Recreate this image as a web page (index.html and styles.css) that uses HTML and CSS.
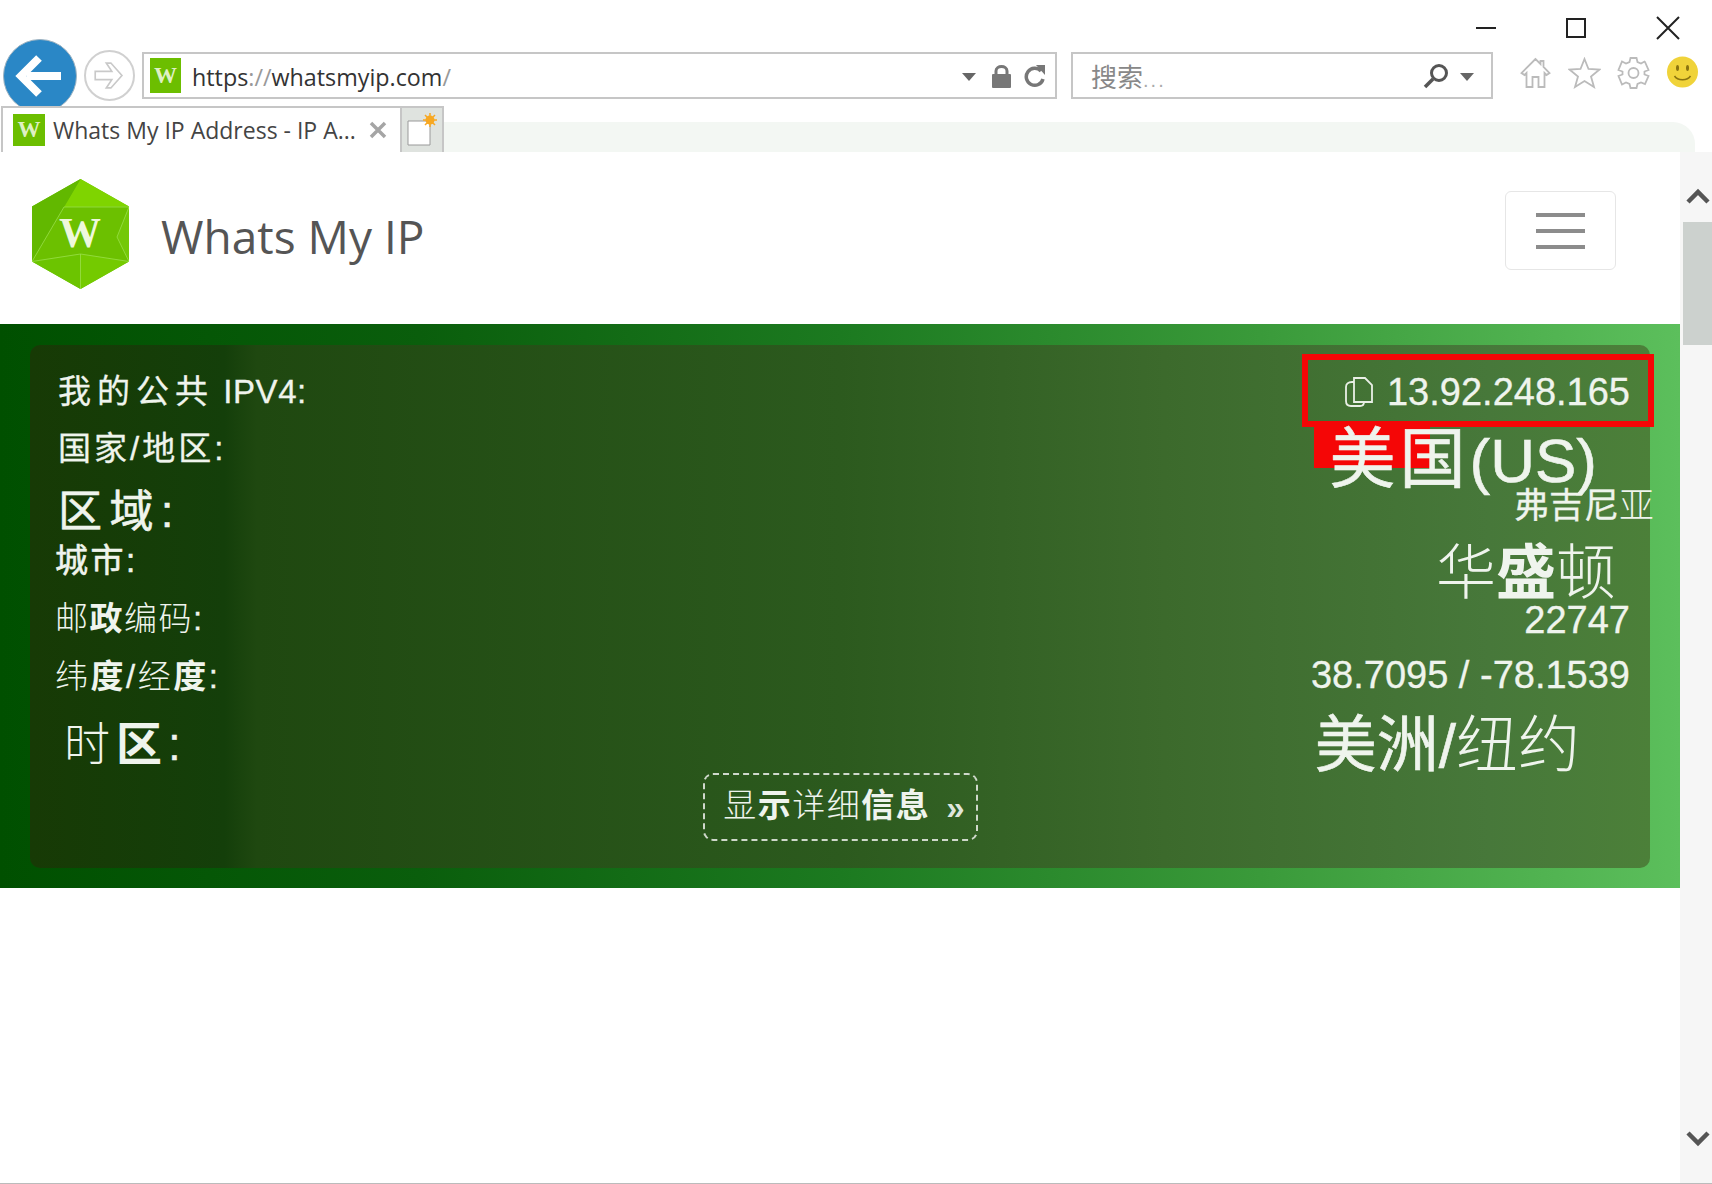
FILE: index.html
```html
<!DOCTYPE html>
<html lang="zh-CN">
<head>
    <meta charset="UTF-8">
    <title>Whats My IP</title>
    <link rel="stylesheet" href="styles.css">
</head>
<body>

    <div class="browser">
        <!-- window buttons -->
        <div class="titlebar">
            <svg class="win-btn win-min" viewBox="0 0 20 20"><path d="M0 10H20" stroke="#222" stroke-width="2"/></svg>
            <svg class="win-btn win-max" viewBox="0 0 20 20"><rect x="1" y="1" width="18" height="18" fill="none" stroke="#222" stroke-width="2"/></svg>
            <svg class="win-btn win-close" viewBox="0 0 24 24"><path d="M1 1L23 23M23 1L1 23" stroke="#222" stroke-width="2"/></svg>
        </div>

        <!-- back, forward, address and search -->
        <div class="navbar">
            <div class="back-btn">
                <svg viewBox="0 0 74 74" width="74" height="74"><path d="M58 37H24M36 19L18 37L36 55" fill="none" stroke="#fff" stroke-width="8"/></svg>
            </div>
            <div class="forward-btn">
                <svg viewBox="0 0 51 51" width="47" height="47"><path d="M10 21H28L22 12H27L39 25.500L27 39H22L28 30H10Z" fill="none" stroke="#c9c9c9" stroke-width="1.800"/></svg>
            </div>
            <div class="address-bar">
                <span class="favicon">W</span>
                <span class="url">https<span class="url-dim">://</span>whatsmyip.com<span class="url-dim">/</span></span>
                <span class="caret"></span>
                <svg class="lock" viewBox="0 0 21 24"><path d="M5 11V7C5 1 16 1 16 7V11" fill="none" stroke="#777" stroke-width="3"/><rect x="1" y="10" width="19" height="14" rx="1" fill="#777"/></svg>
                <svg class="refresh" viewBox="0 0 22 24"><path d="M17 7A8.500 8.500 0 1 0 19 15" fill="none" stroke="#777" stroke-width="3.500"/><path d="M12 1L21 1V11Z" fill="#777"/></svg>
            </div>
            <div class="search-bar">
                <span class="search-text">搜索<span class="search-dots">...</span></span>
                <svg class="magnifier" viewBox="0 0 26 26"><circle cx="16" cy="10" r="7.500" fill="none" stroke="#555" stroke-width="3"/><path d="M10 16L2 24" stroke="#555" stroke-width="3.500"/></svg>
                <span class="caret"></span>
            </div>
            <div class="tools">
                <svg class="tool" viewBox="0 0 32 32"><path d="M16 2L2 16L5 18L7 16V30H13V20H19V30H25V16L27 18L30 16L24 10V4H21V7Z" fill="none" stroke="#bbb" stroke-width="1.800"/></svg>
                <svg class="tool" viewBox="0 0 32 32"><path d="M16 2L20 12L31 12.500L22.500 19.500L25.500 30L16 24L6.500 30L9.500 19.500L1 12.500L12 12Z" fill="none" stroke="#bbb" stroke-width="1.800"/></svg>
                <svg class="tool" viewBox="0 0 32 32"><circle cx="16" cy="16" r="5" fill="none" stroke="#bbb" stroke-width="1.800"/><path d="M13 1H19L20 5L23.500 6.500L27 4.500L27.500 5L31 13L27 14.500V17.500L31 19L27.500 27L23.500 25.500L20 27L19 31H13L12 27L8.500 25.500L4.500 27.500L1 19L5 17.500V14.500L1 13L4.500 4.500L8.500 6.500L12 5Z" fill="none" stroke="#bbb" stroke-width="1.800"/></svg>
                <svg class="tool smiley" viewBox="0 0 32 32"><circle cx="16" cy="16" r="15.500" fill="#f0d33a"/><ellipse cx="11" cy="12" rx="1.500" ry="3" fill="#8a7410"/><ellipse cx="21" cy="12" rx="1.500" ry="3" fill="#8a7410"/><path d="M8 20C11 25 21 25 24 20" fill="none" stroke="#8a7410" stroke-width="1.500"/></svg>
            </div>
        </div>

        <!-- tab strip -->
        <div class="tabbar">
            <div class="tab">
                <span class="favicon tab-icon">W</span>
                <span class="tab-title">Whats My IP Address - IP A...</span>
                <svg class="tab-close" viewBox="0 0 18 18"><path d="M2 2L16 16M16 2L2 16" stroke="#a5a5a5" stroke-width="3.500"/></svg>
            </div>
            <div class="new-tab">
                <svg viewBox="0 0 32 36" width="32" height="36"><path d="M2 9H24V33H2Z" fill="#fff" stroke="#999" stroke-width="1"/><circle cx="24" cy="8" r="4.500" fill="#f7a823"/><path d="M24 1V15M17 8H31M19 3L29 13M29 3L19 13" stroke="#f7a823" stroke-width="1.500"/></svg>
            </div>
            <div class="tab-strip"></div>
        </div>

        <div class="viewport">
            <div class="page">
                <div class="site-header">
                    <div class="brand">
                        <svg class="logo" viewBox="0 0 97 110">
                            <path d="M48.500 0L97 27.500V82.500L48.500 110L0 82.500V27.500Z" fill="#6cc000"/>
                            <path d="M48.500 0L97 27.500L32 28Z" fill="#7fd400"/>
                            <path d="M0 27.500L48.500 0L32 28L0 82.500Z" fill="#62b800"/>
                            <path d="M97 27.500V82.500L85 58Z" fill="#74c808"/>
                            <path d="M0 82.500L48.500 75V110Z" fill="#6cc400"/>
                            <path d="M48.500 75L97 82.500L48.500 110Z" fill="#74ca00"/>
                            <path d="M32 28H97L85 58L97 82.500L48.500 75L0 82.500Z" fill="none" stroke="#9be04a" stroke-width="0.800"/>
                            <path d="M48.500 75V110" stroke="#9be04a" stroke-width="0.800"/>
                            <text x="48" y="68" text-anchor="middle" class="logo-w">W</text>
                        </svg>
                        <span class="brand-name">Whats My IP</span>
                    </div>
                    <div class="toggler">
                        <span></span>
                        <span></span>
                        <span></span>
                    </div>
                </div>

                <div class="ip-band">
                    <div class="ip-panel">
                        <div class="ip-row row-ip">
                            <div class="ip-label"><span class="spaced">我的公共</span> <span class="latin">IPV4:</span></div>
                            <div class="ip-value value-ip">
                                <svg class="copy-icon" viewBox="0 0 30 32"><path d="M10 6H8C4 6 2 8 2 11V25C2 29 4 30 7 30H16C19 30 20 28 20 26" fill="none" stroke="#e9efe6" stroke-width="1.800"/><path d="M10 2H21L28 9V26H10Z" fill="none" stroke="#e9efe6" stroke-width="1.800"/></svg>
                                13.92.248.165
                            </div>
                        </div>
                        <div class="ip-row row-country">
                            <div class="ip-label label-country">国家/地区:</div>
                            <div class="ip-value value-country"><span class="wide">美国</span>(US)</div>
                        </div>
                        <div class="ip-row row-region">
                            <div class="ip-label label-region">区域:</div>
                            <div class="ip-value value-region">弗吉尼<span class="thin">亚</span></div>
                        </div>
                        <div class="ip-row row-city">
                            <div class="ip-label label-city">城市:</div>
                            <div class="ip-value value-city"><span class="thin">华</span><span class="heavy">盛</span><span class="thin">顿</span></div>
                        </div>
                        <div class="ip-row row-zip">
                            <div class="ip-label label-zip"><span class="thin">邮</span><span class="heavy">政</span><span class="thin">编码</span>:</div>
                            <div class="ip-value value-zip">22747</div>
                        </div>
                        <div class="ip-row row-geo">
                            <div class="ip-label label-geo"><span class="thin">纬</span><span class="heavy">度</span>/<span class="thin">经</span><span class="heavy">度</span>:</div>
                            <div class="ip-value value-geo">38.7095 / -78.1539</div>
                        </div>
                        <div class="ip-row row-zone">
                            <div class="ip-label label-zone"><span class="thin">时</span><span class="heavy">区</span>:</div>
                            <div class="ip-value value-zone">美洲/<span class="thin">纽约</span></div>
                        </div>
                        <div class="more-wrap">
                            <div class="more-btn"><span class="more-text"><span class="thin">显</span><span class="heavy">示</span><span class="thin">详细</span><span class="heavy">信息</span></span><span class="more-arrows">»</span></div>
                        </div>
                    </div>
                    <!-- annotation from the original screenshot -->
                    <div class="mark-fill"></div>
                    <div class="mark-box"></div>
                </div>
            </div>

            <div class="scrollbar">
                <svg class="scroll-arrow" viewBox="0 0 24 16"><path d="M2 14L12 4L22 14" fill="none" stroke="#555" stroke-width="4.500"/></svg>
                <div class="scroll-thumb"></div>
                <svg class="scroll-arrow arrow-down" viewBox="0 0 24 16"><path d="M2 2L12 12L22 2" fill="none" stroke="#555" stroke-width="4.500"/></svg>
            </div>
        </div>
    </div>

</body>
</html>
```

FILE: styles.css
```css
* {
    margin: 0;
    padding: 0;
    box-sizing: border-box;
}

html, body {
    height: 100%;
    overflow: hidden;
}

body {
    font-family: "Liberation Sans", "Noto Sans CJK SC", sans-serif;
    background-color: #fff;
}

.browser {
    display: flex;
    flex-direction: column;
    height: 100%;
}

/* window buttons */
.titlebar {
    height: 39px;
    display: flex;
    align-items: center;
    padding: 17px 32px 0 0;
    justify-content: flex-end;
}

.win-btn {
    display: block;
}

.win-min {
    width: 20px;
    height: 20px;
    margin-right: 70px;
}

.win-max {
    width: 20px;
    height: 20px;
    margin-right: 70px;
}

.win-close {
    width: 24px;
    height: 24px;
}

/* navigation row */
.navbar {
    height: 67px;
    display: flex;
    align-items: flex-start;
    padding-left: 3px;
}

.back-btn {
    width: 74px;
    height: 74px;
    flex: none;
    border-radius: 50%;
    background-color: #2a87c6;
    border: 1px solid #9fb4c2;
}

.back-btn svg {
    display: block;
    margin: -1px;
}

.forward-btn {
    width: 51px;
    height: 51px;
    flex: none;
    margin: 11px 0 0 7px;
    border: 2px solid #d0d0d0;
    border-radius: 50%;
}

.address-bar {
    width: 915px;
    height: 47px;
    margin: 13px 0 0 7px;
    display: flex;
    align-items: center;
    border: 2px solid #c6c6c6;
    padding-left: 6px;
    flex: none;
}

.favicon {
    width: 31px;
    height: 35px;
    flex: none;
    background-color: #6cbe00;
    color: #dff0c4;
    font-family: "Liberation Serif", serif;
    font-weight: bold;
    font-size: 23px;
    line-height: 35px;
    text-align: center;
}

.url {
    margin-left: 11px;
    padding-top: 2px;
    font-family: "Open Sans", sans-serif;
    font-size: 23.300px;
    color: #333;
    flex: 1;
}

.url-dim {
    color: #999;
}

.caret {
    width: 0;
    height: 0;
    flex: none;
    border-left: 7px solid transparent;
    border-right: 7px solid transparent;
    border-top: 8px solid #666;
    margin-top: 3px;
}

.lock {
    width: 21px;
    height: 24px;
    margin-left: 15px;
    flex: none;
}

.refresh {
    width: 22px;
    height: 24px;
    margin: 0 9px 0 12px;
    flex: none;
}

.search-bar {
    width: 422px;
    height: 47px;
    margin: 13px 0 0 14px;
    display: flex;
    align-items: center;
    border: 2px solid #c6c6c6;
    padding: 0 17px 0 18px;
    flex: none;
}

.search-text {
    flex: 1;
    font-size: 26px;
    color: #888;
}

.search-dots {
    font-size: 20px;
    letter-spacing: 2px;
    color: #aaa;
}

.magnifier {
    width: 26px;
    height: 26px;
    margin-right: 11px;
    flex: none;
}

.tools {
    display: flex;
    gap: 16px;
    margin: 18px 0 0 26px;
}

.tool {
    width: 33px;
    height: 32px;
    display: block;
}

.smiley {
    margin-top: -1px;
}

/* tab strip */
.tabbar {
    height: 46px;
    display: flex;
    position: relative;
    align-items: flex-end;
    background-color: #fff;
}

.tab {
    width: 399px;
    height: 46px;
    margin-left: 1px;
    display: flex;
    align-items: center;
    padding-left: 10px;
    border: 2px solid #c6c6c6;
    border-bottom: none;
    border-right: none;
    background-color: #fff;
    flex: none;
}

.tab-icon {
    height: 32px;
    line-height: 32px;
    width: 32px;
}

.tab-title {
    font-family: "Open Sans", sans-serif;
    font-size: 23px;
    color: #444;
    margin-left: 8px;
    width: 316px;
    white-space: nowrap;
}

.tab-close {
    width: 18px;
    height: 18px;
    flex: none;
}

.new-tab {
    width: 44px;
    height: 46px;
    flex: none;
    display: flex;
    align-items: center;
    justify-content: center;
    background-color: #dfe3df;
    border: 2px solid #c6c6c6;
    border-bottom: none;
}

.tab-strip {
    width: 1251px;
    height: 30px;
    background-color: #f3f7f3;
    border-top-right-radius: 22px;
}

/* page content */
.viewport {
    flex: 1;
    display: flex;
    min-height: 0;
    border-bottom: 1px solid #bbb;
}

.page {
    flex: 1;
    min-width: 0;
    position: relative;
}

.site-header {
    height: 172px;
    display: flex;
    justify-content: space-between;
    padding: 27px 64px 0 32px;
}

.brand {
    display: flex;
    align-items: center;
    height: 110px;
}

.logo {
    width: 97px;
    height: 110px;
    display: block;
}

.logo-w {
    font-family: "Liberation Serif", serif;
    font-weight: bold;
    font-size: 42px;
    fill: #eef8dd;
}

.brand-name {
    margin: 4px 0 0 32px;
    font-family: "Open Sans", sans-serif;
    font-size: 46px;
    color: #555;
}

.toggler {
    width: 111px;
    height: 79px;
    margin-top: 12px;
    border: 1px solid #e6e6e6;
    border-radius: 6px;
    display: flex;
    flex-direction: column;
    justify-content: center;
    align-items: center;
    gap: 12px;
}

.toggler span {
    width: 49px;
    height: 4px;
    background-color: #8c8c8c;
}

.ip-band {
    height: 564px;
    position: relative;
    padding: 21px 30px 20px;
    background: linear-gradient(90deg, #005000 0%, #0a5e0c 25%, #1c7a20 50%, #3a9a3a 75%, #5cbf5c 100%);
}

.ip-panel {
    position: relative;
    height: 100%;
    padding: 16px 20px 0 26px;
    border-radius: 10px;
    display: grid;
    grid-template-rows: 56px 58px 58px 54px 58px 58px 76px 1fr;
    color: #eff4ed;
    background: linear-gradient(90deg, #173a05 0%, #143f0a 12%, #1f4810 14%, #2c5a1e 50%, #3c6a2c 70%, #47783a 90%, #4c8039 100%);
}

.ip-row {
    display: flex;
    align-items: center;
    justify-content: space-between;
    font-size: 33px;
    white-space: nowrap;
    -webkit-text-stroke: 0.3px #eff4ed;
}

.ip-label {
    padding-left: 2px;
}

.spaced {
    letter-spacing: 6px;
}

.latin {
    letter-spacing: 0.600px;
}

.thin {
    font-weight: 200;
    -webkit-text-stroke: 0;
}

.heavy {
    font-weight: 700;
    -webkit-text-stroke: 0;
}

.ip-value {
    font-size: 38px;
}

.value-ip {
    display: flex;
    align-items: center;
    padding-top: 6px;
}

.copy-icon {
    width: 30px;
    height: 32px;
    margin-right: 13px;
}

.label-country {
    letter-spacing: 3px;
}

.value-country {
    position: relative;
    z-index: 1;
    font-size: 62px;
    line-height: 1;
    margin: 26px 33px 0 0;
    -webkit-text-stroke: 0.6px #eff4ed;
}

.wide {
    font-size: 66px;
    letter-spacing: 4px;
}

.label-region {
    font-size: 44px;
    letter-spacing: 7.500px;
    margin-top: 8px;
    -webkit-text-stroke: 0.6px #eff4ed;
}

.value-region {
    font-size: 35px;
    margin: -4px -24px 0 0;
}

.label-city {
    letter-spacing: 2.500px;
    margin-left: -3px;
    margin-top: -4px;
    -webkit-text-stroke: 0.6px #eff4ed;
}

.value-city {
    font-size: 60px;
    line-height: 1;
    margin: 28px 14px 0 0;
}

.label-zip {
    letter-spacing: 1.500px;
    margin-left: -3px;
}

.value-zip {
    padding-top: 8px;
}

.label-geo {
    letter-spacing: 2.500px;
    margin-left: -3px;
}

.value-geo {
    padding-top: 2px;
}

.label-zone {
    font-size: 46px;
    letter-spacing: 6px;
    margin-left: 6px;
    margin-top: -2px;
}

.value-zone {
    font-size: 62px;
    line-height: 1;
    margin: 9px 50px 0 0;
    -webkit-text-stroke: 0.6px #eff4ed;
}

.more-wrap {
    display: flex;
    justify-content: center;
    align-items: flex-start;
}

.more-btn {
    width: 275px;
    height: 68px;
    margin: -6px 0 0 -6px;
    padding: 0 0 8px 8px;
    display: flex;
    align-items: center;
    justify-content: center;
    border: 2px dashed #cfd8cb;
    border-radius: 10px;
    font-size: 33px;
}

.more-text {
    letter-spacing: 1.500px;
}

.more-arrows {
    margin-left: 16px;
    font-weight: bold;
    color: #dfe6dc;
    margin-top: 10px;
}

.mark-box {
    position: absolute;
    left: 1302px;
    top: 30px;
    width: 352px;
    height: 73px;
    border: 6px solid #f50606;
}

.mark-fill {
    position: absolute;
    left: 1314px;
    top: 103px;
    width: 116px;
    height: 41px;
    background-color: #f50606;
}

/* scrollbar */
.scrollbar {
    width: 32px;
    flex: none;
    background-color: #f6f6f6;
    position: relative;
    padding: 36px 0 0 3px;
    display: flex;
    flex-direction: column;
    align-items: center;
}

.scroll-arrow {
    width: 24px;
    height: 16px;
    flex: none;
}

.scroll-thumb {
    width: 29px;
    height: 123px;
    margin-top: 18px;
    background-color: #ccd1ce;
}

.arrow-down {
    margin-top: auto;
    margin-bottom: 36px;
}
```
